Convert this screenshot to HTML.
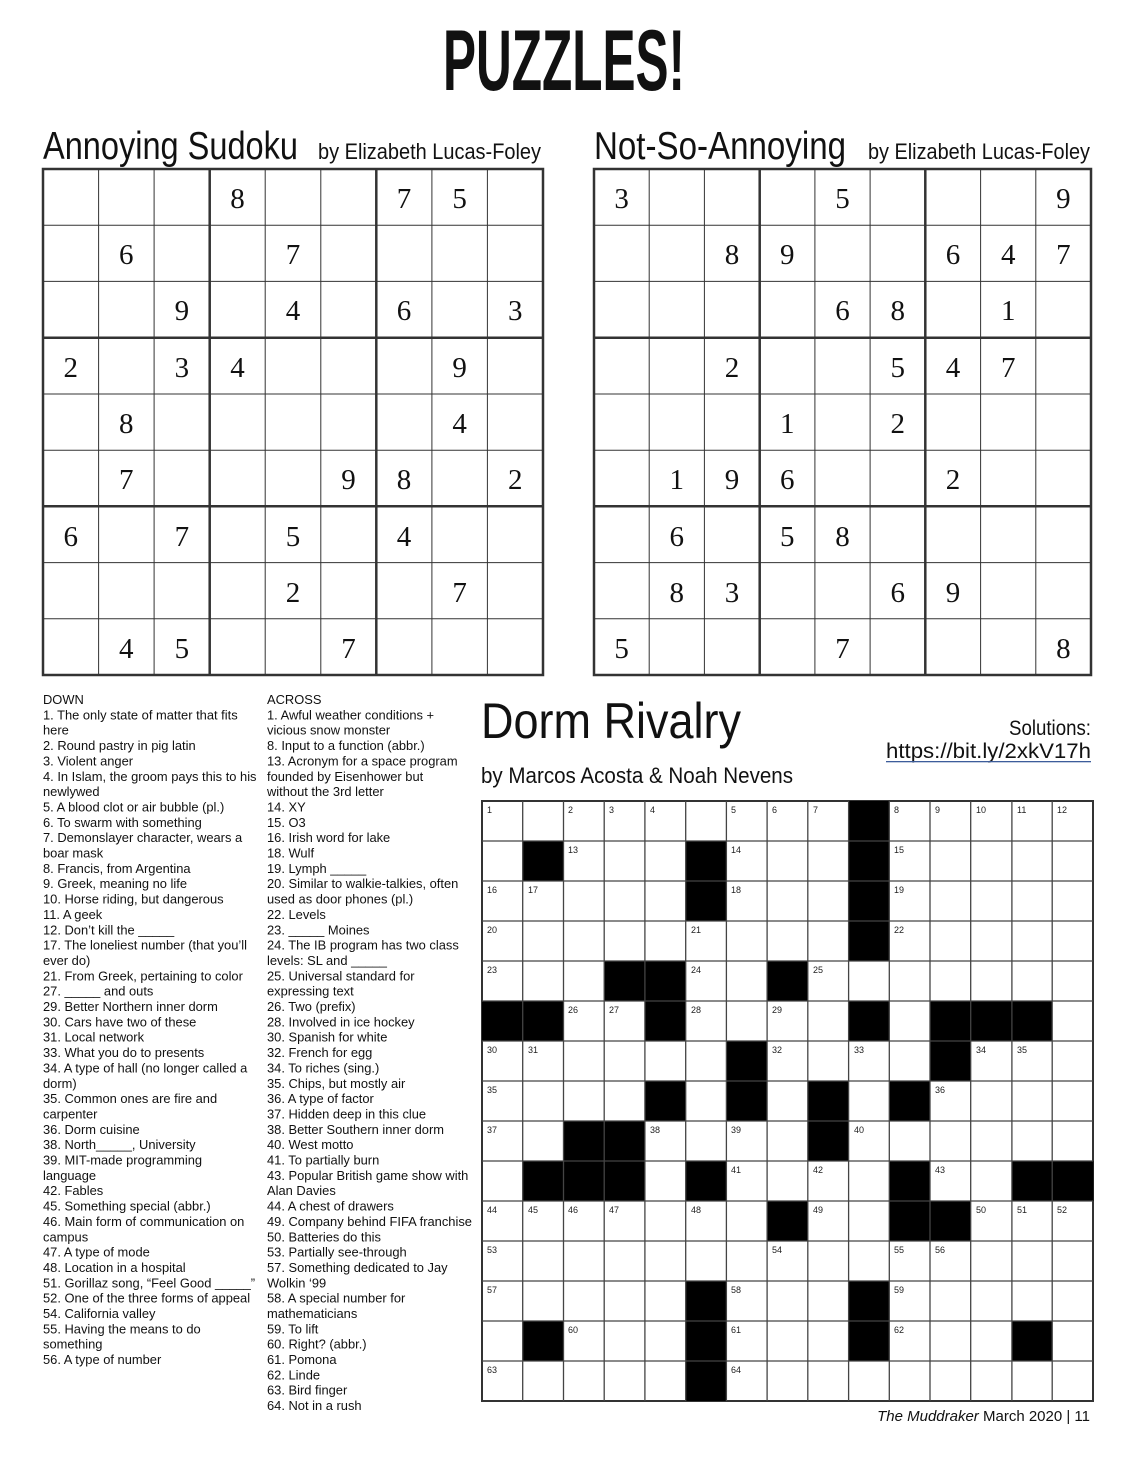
<!DOCTYPE html>
<html><head><meta charset="utf-8"><style>
html,body{margin:0;padding:0;background:#fff}
svg{display:block}
.d{font-family:"Liberation Serif",serif;font-size:29px;text-anchor:middle;fill:#111}
.n{font-family:"Liberation Sans",sans-serif;font-size:9px;fill:#222}
.c{font-family:"Liberation Sans",sans-serif;font-size:12.9px;fill:#111}
.h{font-family:"Liberation Sans",sans-serif;fill:#111}
</style></head><body>
<svg width="1138" height="1462" viewBox="0 0 1138 1462" xmlns="http://www.w3.org/2000/svg">
<rect width="1138" height="1462" fill="#fff"/>
<text x="564" y="90" class="h" font-size="86" font-weight="bold" text-anchor="middle" textLength="242" lengthAdjust="spacingAndGlyphs" fill="#1a1a1a" style="font-family:'Liberation Sans Narrow','Liberation Sans',sans-serif">PUZZLES!</text>

<text x="43" y="159" class="h" font-size="39" textLength="255" lengthAdjust="spacingAndGlyphs">Annoying Sudoku</text>
<text x="318" y="159" class="h" font-size="22" textLength="223" lengthAdjust="spacingAndGlyphs">by Elizabeth Lucas-Foley</text>
<text x="594" y="159" class="h" font-size="39" textLength="252" lengthAdjust="spacingAndGlyphs">Not-So-Annoying</text>
<text x="868" y="159" class="h" font-size="22" textLength="222" lengthAdjust="spacingAndGlyphs">by Elizabeth Lucas-Foley</text>

<g stroke="#333" fill="none">
<rect x="43" y="169" width="500" height="506" stroke-width="2.5"/>
<path stroke-width="1" d="M98.6 169V675M154.1 169V675M265.2 169V675M320.8 169V675M431.9 169V675M487.4 169V675M43 225.2H543M43 281.4H543M43 394H543M43 450.2H543M43 562.6H543M43 618.8H543"/>
<path stroke-width="2.5" d="M209.7 169V675M376.3 169V675M43 337.7H543M43 506.3H543"/>
<rect x="594" y="169" width="497" height="506" stroke-width="2.5"/>
<path stroke-width="1" d="M649.2 169V675M704.4 169V675M814.9 169V675M870.1 169V675M980.6 169V675M1035.8 169V675M594 225.2H1091M594 281.4H1091M594 394H1091M594 450.2H1091M594 562.6H1091M594 618.8H1091"/>
<path stroke-width="2.5" d="M759.7 169V675M925.3 169V675M594 337.7H1091M594 506.3H1091"/>
</g>
<g class="d">
<text x="237.5" y="208">8</text><text x="404" y="208">7</text><text x="459.6" y="208">5</text>
<text x="126.3" y="264">6</text><text x="293" y="264">7</text>
<text x="181.9" y="320">9</text><text x="293" y="320">4</text><text x="404" y="320">6</text><text x="515.2" y="320">3</text>
<text x="70.8" y="377">2</text><text x="181.9" y="377">3</text><text x="237.5" y="377">4</text><text x="459.6" y="377">9</text>
<text x="126.3" y="433">8</text><text x="459.6" y="433">4</text>
<text x="126.3" y="489">7</text><text x="348.5" y="489">9</text><text x="404" y="489">8</text><text x="515.2" y="489">2</text>
<text x="70.8" y="546">6</text><text x="181.9" y="546">7</text><text x="293" y="546">5</text><text x="404" y="546">4</text>
<text x="293" y="602">2</text><text x="459.6" y="602">7</text>
<text x="126.3" y="658">4</text><text x="181.9" y="658">5</text><text x="348.5" y="658">7</text>

<text x="621.6" y="208">3</text><text x="842.5" y="208">5</text><text x="1063.4" y="208">9</text>
<text x="732" y="264">8</text><text x="787.3" y="264">9</text><text x="953" y="264">6</text><text x="1008.2" y="264">4</text><text x="1063.4" y="264">7</text>
<text x="842.5" y="320">6</text><text x="897.7" y="320">8</text><text x="1008.2" y="320">1</text>
<text x="732" y="377">2</text><text x="897.7" y="377">5</text><text x="953" y="377">4</text><text x="1008.2" y="377">7</text>
<text x="787.3" y="433">1</text><text x="897.7" y="433">2</text>
<text x="676.8" y="489">1</text><text x="732" y="489">9</text><text x="787.3" y="489">6</text><text x="953" y="489">2</text>
<text x="676.8" y="546">6</text><text x="787.3" y="546">5</text><text x="842.5" y="546">8</text>
<text x="676.8" y="602">8</text><text x="732" y="602">3</text><text x="897.7" y="602">6</text><text x="953" y="602">9</text>
<text x="621.6" y="658">5</text><text x="842.5" y="658">7</text><text x="1063.4" y="658">8</text>
</g>

<text class="c"><tspan x="43" y="704">DOWN</tspan>
<tspan x="43" dy="15.35">1. The only state of matter that fits</tspan>
<tspan x="43" dy="15.35">here</tspan>
<tspan x="43" dy="15.35">2. Round pastry in pig latin</tspan>
<tspan x="43" dy="15.35">3. Violent anger</tspan>
<tspan x="43" dy="15.35">4. In Islam, the groom pays this to his</tspan>
<tspan x="43" dy="15.35">newlywed</tspan>
<tspan x="43" dy="15.35">5. A blood clot or air bubble (pl.)</tspan>
<tspan x="43" dy="15.35">6. To swarm with something</tspan>
<tspan x="43" dy="15.35">7. Demonslayer character, wears a</tspan>
<tspan x="43" dy="15.35">boar mask</tspan>
<tspan x="43" dy="15.35">8. Francis, from Argentina</tspan>
<tspan x="43" dy="15.35">9. Greek, meaning no life</tspan>
<tspan x="43" dy="15.35">10. Horse riding, but dangerous</tspan>
<tspan x="43" dy="15.35">11. A geek</tspan>
<tspan x="43" dy="15.35">12. Don’t kill the _____</tspan>
<tspan x="43" dy="15.35">17. The loneliest number (that you’ll</tspan>
<tspan x="43" dy="15.35">ever do)</tspan>
<tspan x="43" dy="15.35">21. From Greek, pertaining to color</tspan>
<tspan x="43" dy="15.35">27. _____ and outs</tspan>
<tspan x="43" dy="15.35">29. Better Northern inner dorm</tspan>
<tspan x="43" dy="15.35">30. Cars have two of these</tspan>
<tspan x="43" dy="15.35">31. Local network</tspan>
<tspan x="43" dy="15.35">33. What you do to presents</tspan>
<tspan x="43" dy="15.35">34. A type of hall (no longer called a</tspan>
<tspan x="43" dy="15.35">dorm)</tspan>
<tspan x="43" dy="15.35">35. Common ones are fire and</tspan>
<tspan x="43" dy="15.35">carpenter</tspan>
<tspan x="43" dy="15.35">36.  Dorm cuisine</tspan>
<tspan x="43" dy="15.35">38. North_____, University</tspan>
<tspan x="43" dy="15.35">39. MIT-made programming</tspan>
<tspan x="43" dy="15.35">language</tspan>
<tspan x="43" dy="15.35">42. Fables</tspan>
<tspan x="43" dy="15.35">45. Something special (abbr.)</tspan>
<tspan x="43" dy="15.35">46. Main form of communication on</tspan>
<tspan x="43" dy="15.35">campus</tspan>
<tspan x="43" dy="15.35">47. A type of mode</tspan>
<tspan x="43" dy="15.35">48. Location in a hospital</tspan>
<tspan x="43" dy="15.35">51. Gorillaz song, “Feel Good _____”</tspan>
<tspan x="43" dy="15.35">52. One of the three forms of appeal</tspan>
<tspan x="43" dy="15.35">54. California valley</tspan>
<tspan x="43" dy="15.35">55. Having the means to do</tspan>
<tspan x="43" dy="15.35">something</tspan>
<tspan x="43" dy="15.35">56. A type of number</tspan>
</text>
<text class="c"><tspan x="267" y="704">ACROSS</tspan>
<tspan x="267" dy="15.35">1. Awful weather conditions +</tspan>
<tspan x="267" dy="15.35">vicious snow monster</tspan>
<tspan x="267" dy="15.35">8. Input to a function (abbr.)</tspan>
<tspan x="267" dy="15.35">13. Acronym for a space program</tspan>
<tspan x="267" dy="15.35">founded by Eisenhower but</tspan>
<tspan x="267" dy="15.35">without the 3rd letter</tspan>
<tspan x="267" dy="15.35">14. XY</tspan>
<tspan x="267" dy="15.35">15. O3</tspan>
<tspan x="267" dy="15.35">16. Irish word for lake</tspan>
<tspan x="267" dy="15.35">18. Wulf</tspan>
<tspan x="267" dy="15.35">19. Lymph _____</tspan>
<tspan x="267" dy="15.35">20. Similar to walkie-talkies, often</tspan>
<tspan x="267" dy="15.35">used as door phones (pl.)</tspan>
<tspan x="267" dy="15.35">22. Levels</tspan>
<tspan x="267" dy="15.35">23. _____ Moines</tspan>
<tspan x="267" dy="15.35">24. The IB program has two class</tspan>
<tspan x="267" dy="15.35">levels: SL and _____</tspan>
<tspan x="267" dy="15.35">25. Universal standard for</tspan>
<tspan x="267" dy="15.35">expressing text</tspan>
<tspan x="267" dy="15.35">26. Two (prefix)</tspan>
<tspan x="267" dy="15.35">28. Involved in ice hockey</tspan>
<tspan x="267" dy="15.35">30. Spanish for white</tspan>
<tspan x="267" dy="15.35">32. French for egg</tspan>
<tspan x="267" dy="15.35">34. To riches (sing.)</tspan>
<tspan x="267" dy="15.35">35. Chips, but mostly air</tspan>
<tspan x="267" dy="15.35">36. A type of factor</tspan>
<tspan x="267" dy="15.35">37. Hidden deep in this clue</tspan>
<tspan x="267" dy="15.35">38. Better Southern inner dorm</tspan>
<tspan x="267" dy="15.35">40. West motto</tspan>
<tspan x="267" dy="15.35">41. To partially burn</tspan>
<tspan x="267" dy="15.35">43. Popular British game show with</tspan>
<tspan x="267" dy="15.35">Alan Davies</tspan>
<tspan x="267" dy="15.35">44. A chest of drawers</tspan>
<tspan x="267" dy="15.35">49. Company behind FIFA franchise</tspan>
<tspan x="267" dy="15.35">50. Batteries do this</tspan>
<tspan x="267" dy="15.35">53. Partially see-through</tspan>
<tspan x="267" dy="15.35">57. Something dedicated to Jay</tspan>
<tspan x="267" dy="15.35">Wolkin ‘99</tspan>
<tspan x="267" dy="15.35">58. A special number for</tspan>
<tspan x="267" dy="15.35">mathematicians</tspan>
<tspan x="267" dy="15.35">59. To lift</tspan>
<tspan x="267" dy="15.35">60. Right? (abbr.)</tspan>
<tspan x="267" dy="15.35">61. Pomona</tspan>
<tspan x="267" dy="15.35">62. Linde</tspan>
<tspan x="267" dy="15.35">63. Bird finger</tspan>
<tspan x="267" dy="15.35">64. Not in a rush</tspan>
</text>

<text x="481" y="738" class="h" font-size="50" textLength="260" lengthAdjust="spacingAndGlyphs">Dorm Rivalry</text>
<text x="481" y="783" class="h" font-size="22" textLength="312" lengthAdjust="spacingAndGlyphs">by Marcos Acosta &amp; Noah Nevens</text>
<text x="1091" y="735" class="h" font-size="21" text-anchor="end" textLength="82" lengthAdjust="spacingAndGlyphs">Solutions:</text>
<text x="886" y="758" class="h" font-size="21" fill="#3d5d9b" textLength="205" lengthAdjust="spacingAndGlyphs">https://bit.ly/2xkV17h</text>
<rect x="886" y="761" width="205" height="1.3" fill="#3d5d9b"/>

<g id="cw">
<rect x="482" y="801" width="611" height="600" fill="#fff" stroke="#333" stroke-width="2"/>
<g fill="#000">
<rect x="848.6" y="801" width="40.7" height="160"/>
<rect x="522.7" y="841" width="40.7" height="40"/>
<rect x="685.7" y="841" width="40.7" height="80"/>
<rect x="604.2" y="961" width="81.5" height="40"/>
<rect x="767.1" y="961" width="40.7" height="40"/>
<rect x="482" y="1001" width="81.5" height="40"/>
<rect x="644.9" y="1001" width="40.7" height="40"/>
<rect x="848.6" y="1001" width="40.7" height="40"/>
<rect x="930.0" y="1001" width="122.2" height="40"/>
<rect x="726.4" y="1041" width="40.7" height="80"/>
<rect x="930.0" y="1041" width="40.7" height="40"/>
<rect x="644.9" y="1081" width="40.7" height="40"/>
<rect x="807.8" y="1081" width="40.7" height="80"/>
<rect x="889.3" y="1081" width="40.7" height="40"/>
<rect x="563.5" y="1121" width="81.5" height="40"/>
<rect x="522.7" y="1161" width="122.2" height="40"/>
<rect x="685.7" y="1161" width="40.7" height="40"/>
<rect x="889.3" y="1161" width="40.7" height="80"/>
<rect x="1011.9" y="1161" width="81.5" height="40"/>
<rect x="767.1" y="1201" width="40.7" height="40"/>
<rect x="930.0" y="1201" width="40.7" height="40"/>
<rect x="685.7" y="1281" width="40.7" height="120"/>
<rect x="848.6" y="1281" width="40.7" height="80"/>
<rect x="522.7" y="1321" width="40.7" height="40"/>
<rect x="1011.9" y="1321" width="40.7" height="40"/>
</g>
<path stroke="#444" stroke-width="1.3" fill="none" d="M522.7 801V1401M563.5 801V1401M604.2 801V1401M644.9 801V1401M685.7 801V1401M726.4 801V1401M767.1 801V1401M807.8 801V1401M848.6 801V1401M889.3 801V1401M930 801V1401M970.7 801V1401M1011.9 801V1401M1052.2 801V1401M482 841H1093M482 881H1093M482 921H1093M482 961H1093M482 1001H1093M482 1041H1093M482 1081H1093M482 1121H1093M482 1161H1093M482 1201H1093M482 1241H1093M482 1281H1093M482 1321H1093M482 1361H1093"/>
<g class="n">
<text x="487" y="813">1</text><text x="568" y="813">2</text><text x="609" y="813">3</text><text x="650" y="813">4</text><text x="731" y="813">5</text><text x="772" y="813">6</text><text x="813" y="813">7</text><text x="894" y="813">8</text><text x="935" y="813">9</text><text x="976" y="813">10</text><text x="1017" y="813">11</text><text x="1057" y="813">12</text>
<text x="568" y="853">13</text><text x="731" y="853">14</text><text x="894" y="853">15</text>
<text x="487" y="893">16</text><text x="528" y="893">17</text><text x="731" y="893">18</text><text x="894" y="893">19</text>
<text x="487" y="933">20</text><text x="691" y="933">21</text><text x="894" y="933">22</text>
<text x="487" y="973">23</text><text x="691" y="973">24</text><text x="813" y="973">25</text>
<text x="568" y="1013">26</text><text x="609" y="1013">27</text><text x="691" y="1013">28</text><text x="772" y="1013">29</text>
<text x="487" y="1053">30</text><text x="528" y="1053">31</text><text x="772" y="1053">32</text><text x="854" y="1053">33</text><text x="976" y="1053">34</text><text x="1017" y="1053">35</text>
<text x="487" y="1093">35</text><text x="935" y="1093">36</text>
<text x="487" y="1133">37</text><text x="650" y="1133">38</text><text x="731" y="1133">39</text><text x="854" y="1133">40</text>
<text x="731" y="1173">41</text><text x="813" y="1173">42</text><text x="935" y="1173">43</text>
<text x="487" y="1213">44</text><text x="528" y="1213">45</text><text x="568" y="1213">46</text><text x="609" y="1213">47</text><text x="691" y="1213">48</text><text x="813" y="1213">49</text><text x="976" y="1213">50</text><text x="1017" y="1213">51</text><text x="1057" y="1213">52</text>
<text x="487" y="1253">53</text><text x="772" y="1253">54</text><text x="894" y="1253">55</text><text x="935" y="1253">56</text>
<text x="487" y="1293">57</text><text x="731" y="1293">58</text><text x="894" y="1293">59</text>
<text x="568" y="1333">60</text><text x="731" y="1333">61</text><text x="894" y="1333">62</text>
<text x="487" y="1373">63</text><text x="731" y="1373">64</text>
</g>
</g>

<text x="1090" y="1421" class="h" font-size="15" text-anchor="end" fill="#222"><tspan font-style="italic">The Muddraker</tspan> March 2020 | 11</text>
</svg>
</body></html>
